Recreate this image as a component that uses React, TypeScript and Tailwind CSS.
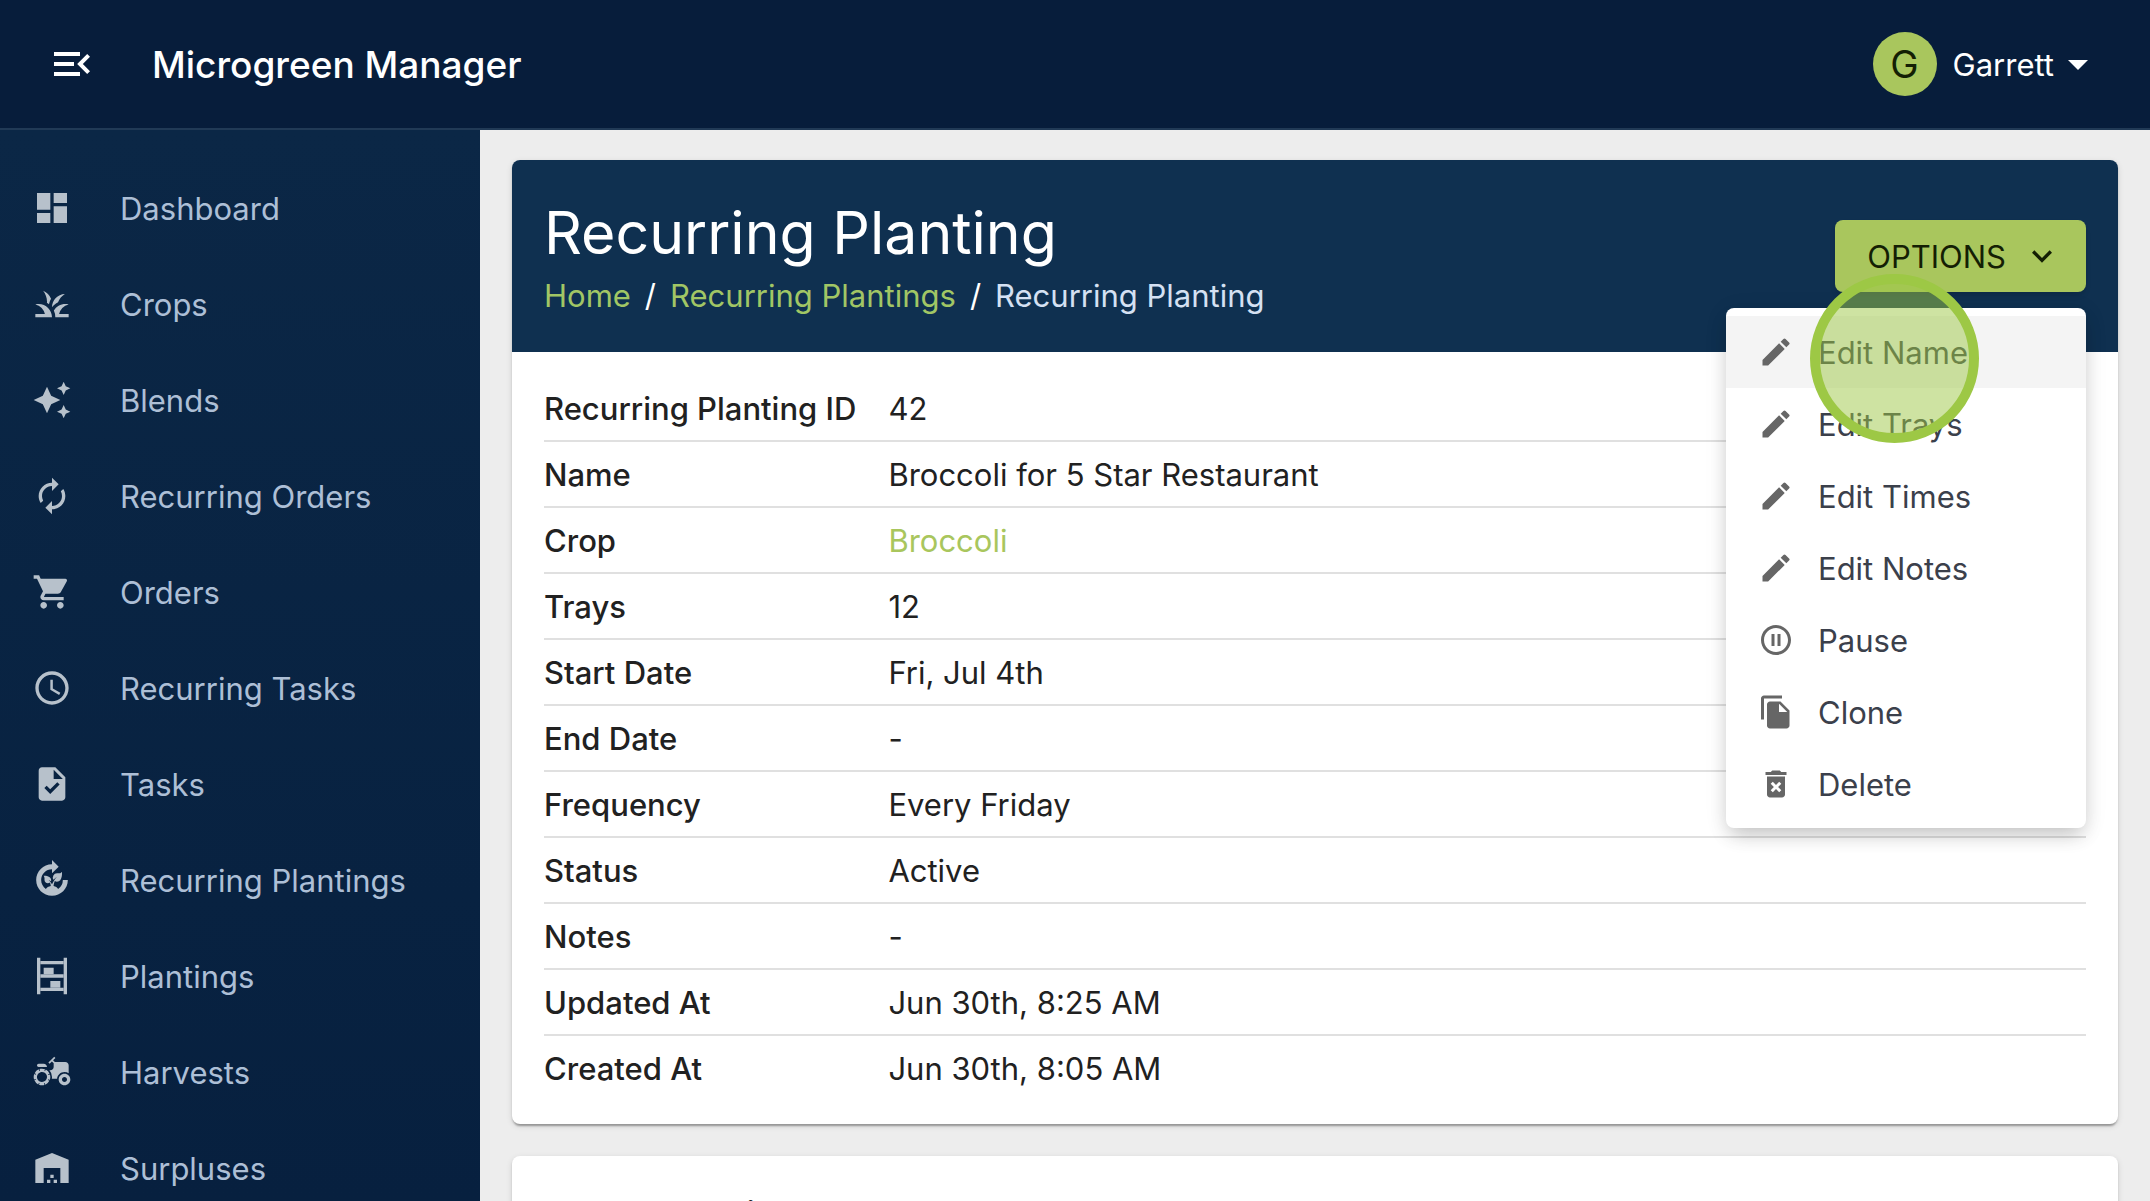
import React from "react";
import type { IconType } from "react-icons";
import {
  MdAccessTime,
  MdAgriculture,
  MdArrowDropDown,
  MdAutoAwesome,
  MdAutorenew,
  MdCompost,
  MdDashboard,
  MdDeleteForever,
  MdEdit,
  MdFileCopy,
  MdGrass,
  MdKeyboardArrowDown,
  MdMenuOpen,
  MdPauseCircleOutline,
  MdShoppingCart,
  MdTask,
  MdWarehouse,
} from "react-icons/md";

const ShelvesIcon = ({ className }: { className?: string }) => (
  <svg viewBox="0 0 24 24" fill="currentColor" className={className} aria-hidden>
    <path d="M3 1h2v22H3zM19 1h2v22h-2z" />
    <path d="M5 3h14v2H5zM5 11h14v2H5zM5 19h14v2H5z" />
    <path d="M7 7h6v4H7zM11 15h6v4h-6z" />
  </svg>
);

interface NavItem {
  label: string;
  icon: IconType | typeof ShelvesIcon;
}

const navItems: NavItem[] = [
  { label: "Dashboard", icon: MdDashboard },
  { label: "Crops", icon: MdGrass },
  { label: "Blends", icon: MdAutoAwesome },
  { label: "Recurring Orders", icon: MdAutorenew },
  { label: "Orders", icon: MdShoppingCart },
  { label: "Recurring Tasks", icon: MdAccessTime },
  { label: "Tasks", icon: MdTask },
  { label: "Recurring Plantings", icon: MdCompost },
  { label: "Plantings", icon: ShelvesIcon },
  { label: "Harvests", icon: MdAgriculture },
  { label: "Surpluses", icon: MdWarehouse },
];

const details: { label: string; value: string; href?: string }[] = [
  { label: "Recurring Planting ID", value: "42" },
  { label: "Name", value: "Broccoli for 5 Star Restaurant" },
  { label: "Crop", value: "Broccoli", href: "#crop" },
  { label: "Trays", value: "12" },
  { label: "Start Date", value: "Fri, Jul 4th" },
  { label: "End Date", value: "-" },
  { label: "Frequency", value: "Every Friday" },
  { label: "Status", value: "Active" },
  { label: "Notes", value: "-" },
  { label: "Updated At", value: "Jun 30th, 8:25 AM" },
  { label: "Created At", value: "Jun 30th, 8:05 AM" },
];

const menuItems: { label: string; icon: IconType; active?: boolean }[] = [
  { label: "Edit Name", icon: MdEdit, active: true },
  { label: "Edit Trays", icon: MdEdit },
  { label: "Edit Times", icon: MdEdit },
  { label: "Edit Notes", icon: MdEdit },
  { label: "Pause", icon: MdPauseCircleOutline },
  { label: "Clone", icon: MdFileCopy },
  { label: "Delete", icon: MdDeleteForever },
];

const cardShadow =
  "shadow-[0_4px_2px_-2px_rgba(0,0,0,0.2),0_2px_2px_0_rgba(0,0,0,0.14),0_2px_6px_0_rgba(0,0,0,0.12)]";

const TopBar = () => (
  <header className="flex h-[130px] shrink-0 items-center justify-between border-b-2 border-[#213a56] bg-[#071d3b] px-12 text-white">
    <div className="flex items-center gap-14">
      <button type="button" aria-label="Collapse menu">
        <MdMenuOpen className="size-12" />
      </button>
      <span className="pt-0.5 text-[37px] leading-[60px] font-medium">Microgreen Manager</span>
    </div>
    <button type="button" className="flex items-center">
      <span className="flex size-16 items-center justify-center rounded-full bg-[#a9c65d] text-[38px] text-[#141f04]">
        G
      </span>
      <span className="ml-4 pt-0.5 text-[31px]">Garrett</span>
      <MdArrowDropDown className="size-12" />
    </button>
  </header>
);

const Sidebar = () => (
  <nav className="w-[480px] shrink-0 overflow-hidden bg-linear-to-b from-[#0b2746] to-[#07203f] pt-[30px]">
    <ul>
      {navItems.map(({ label, icon: Icon }) => (
        <li key={label}>
          <a href="#nav" className="flex h-24 items-center gap-12 px-8 text-[31px] text-[#adbfd6]">
            <Icon className="size-10 shrink-0 text-[#b7c1cb]" />
            <span className="pt-0.5">{label}</span>
          </a>
        </li>
      ))}
    </ul>
  </nav>
);

const OptionsMenu = () => (
  <div className="relative">
    <button
      type="button"
      aria-haspopup="menu"
      aria-expanded="true"
      className="flex h-[72px] items-center gap-4 rounded-lg bg-[#a9c65d] pl-8 pr-6 text-[31px] text-[#141f04] shadow-md"
    >
      <span className="pt-0.5">OPTIONS</span>
      <MdKeyboardArrowDown className="size-10" />
    </button>
    <div
      role="menu"
      className="absolute top-[88px] right-0 z-10 w-[360px] rounded-lg bg-white py-2 shadow-[0_10px_20px_-4px_rgba(0,0,0,0.2),0_4px_24px_0_rgba(0,0,0,0.08)]"
    >
      {menuItems.map(({ label, icon: Icon, active }) => (
        <button
          key={label}
          type="button"
          role="menuitem"
          className={`flex h-[72px] w-full items-center gap-6 px-8 text-[31px] text-[#3b404b] ${active ? "bg-[#f4f4f4]" : "bg-white"}`}
        >
          <Icon className="size-9 text-[#666666]" />
          <span className="pt-0.5">{label}</span>
        </button>
      ))}
      {/* click highlight */}
      <span className="pointer-events-none absolute -top-[34px] left-[84px] size-[169px] rounded-full border-[10px] border-[#9dc845] bg-[#9dc845]/50" />
    </div>
  </div>
);

const DetailsCard = () => (
  <section className={`shrink-0 rounded-lg bg-white ${cardShadow}`}>
    <div className="flex items-center justify-between rounded-t-lg bg-[#0f3050] p-8">
      <div>
        <h1 className="pt-0.5 text-[59px] leading-[78px] text-white">Recurring Planting</h1>
        <nav aria-label="Breadcrumb" className="flex gap-[14px] text-[31px] leading-[48px] text-white">
          <a href="#home" className="text-[#a1c665]">
            Home
          </a>
          <span>/</span>
          <a href="#plantings" className="text-[#a1c665]">
            Recurring Plantings
          </a>
          <span>/</span>
          <span className="text-[#d5e1f3]">Recurring Planting</span>
        </nav>
      </div>
      <OptionsMenu />
    </div>
    <div className="px-8 py-6">
      <table className="w-full border-separate border-spacing-0 text-left text-[31px] text-[#212121]">
        <tbody>
          {details.map(({ label, value, href }) => (
            <tr key={label} className="group">
              <th
                scope="row"
                className="h-[66px] w-px border-b-2 border-[#e0e0e0] pt-0.5 pr-8 font-medium whitespace-nowrap group-last:h-16 group-last:border-b-0"
              >
                {label}
              </th>
              <td className="border-b-2 border-[#e0e0e0] pt-0.5 group-last:border-b-0">
                {href ? (
                  <a href={href} className="text-[#a9c65d]">
                    {value}
                  </a>
                ) : (
                  value
                )}
              </td>
            </tr>
          ))}
        </tbody>
      </table>
    </div>
  </section>
);

export default function App() {
  return (
    <div className="flex h-screen flex-col overflow-hidden font-[Inter,'Liberation_Sans',sans-serif]">
      <TopBar />
      <div className="flex min-h-0 flex-1">
        <Sidebar />
        <main className="flex min-w-0 flex-1 flex-col gap-8 overflow-hidden bg-[#ededed] px-8 pt-[30px]">
          <DetailsCard />
          <section className={`shrink-0 rounded-lg bg-white px-8 py-6 ${cardShadow}`}>
            <h2 className="flex h-16 items-center pt-0.5 text-[31px] font-medium text-[#212121]">
              Planned Plantings
            </h2>
          </section>
        </main>
      </div>
    </div>
  );
}
